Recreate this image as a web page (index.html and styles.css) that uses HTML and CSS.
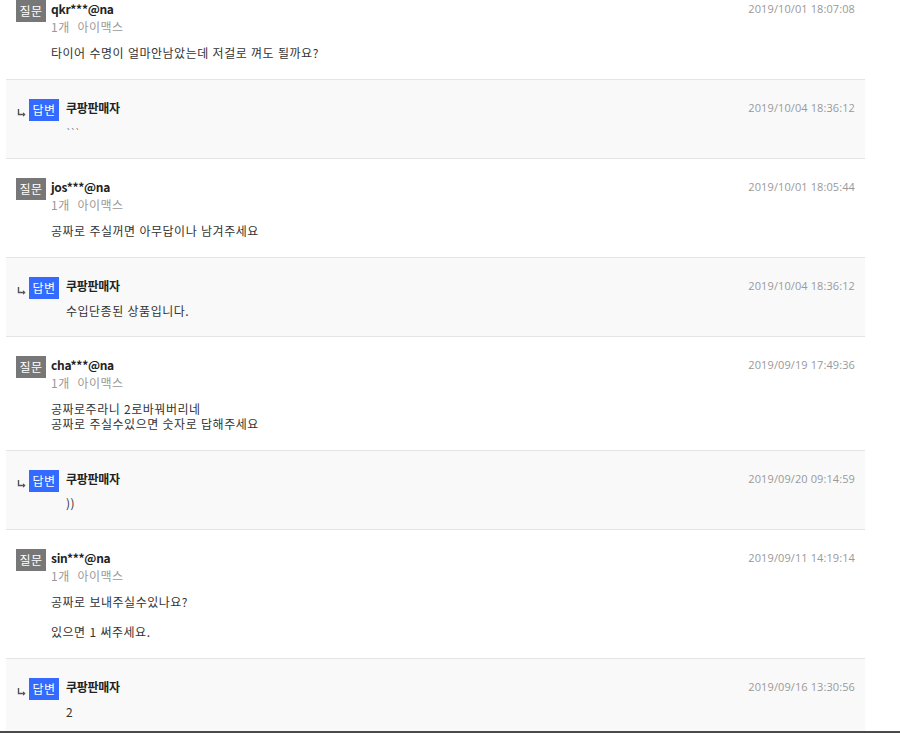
FILE: index.html
```html
<!DOCTYPE html>
<html lang="ko">
<head>
<meta charset="utf-8">
<title>상품문의</title>
<link rel="stylesheet" href="styles.css">
</head>
<body>
<div class="viewport">
  <div class="qna-list">
    <div class="qna-q">
      <span class="badge badge-q">질문</span>
      <div class="qna-body">
        <div class="qna-name">qkr***@na</div>
        <div class="qna-meta">1개&nbsp;&nbsp;아이맥스</div>
        <div class="qna-text"><p>타이어 수명이 얼마안남았는데 저걸로 껴도 될까요?</p></div>
      </div>
      <div class="qna-date">2019/10/01 18:07:08</div>
    </div>
    <div class="qna-a">
      <span class="arrow"><svg width="9" height="8" viewBox="0 0 9 8"><path d="M1.5 0V5.5H7.5" fill="none" stroke="#555" stroke-width="1.4"/><path d="M6 3.2L8.6 5.5L6 7.8Z" fill="#555"/></svg></span>
      <span class="badge badge-a">답변</span>
      <div class="qna-body">
        <div class="qna-name">쿠팡판매자</div>
        <div class="qna-answer"><span class="ticks">```</span></div>
      </div>
      <div class="qna-date">2019/10/04 18:36:12</div>
    </div>

    <div class="qna-q">
      <span class="badge badge-q">질문</span>
      <div class="qna-body">
        <div class="qna-name">jos***@na</div>
        <div class="qna-meta">1개&nbsp;&nbsp;아이맥스</div>
        <div class="qna-text"><p>공짜로 주실꺼면 아무답이나 남겨주세요</p></div>
      </div>
      <div class="qna-date">2019/10/01 18:05:44</div>
    </div>
    <div class="qna-a">
      <span class="arrow"><svg width="9" height="8" viewBox="0 0 9 8"><path d="M1.5 0V5.5H7.5" fill="none" stroke="#555" stroke-width="1.4"/><path d="M6 3.2L8.6 5.5L6 7.8Z" fill="#555"/></svg></span>
      <span class="badge badge-a">답변</span>
      <div class="qna-body">
        <div class="qna-name">쿠팡판매자</div>
        <div class="qna-answer">수입단종된 상품입니다.</div>
      </div>
      <div class="qna-date">2019/10/04 18:36:12</div>
    </div>

    <div class="qna-q">
      <span class="badge badge-q">질문</span>
      <div class="qna-body">
        <div class="qna-name">cha***@na</div>
        <div class="qna-meta">1개&nbsp;&nbsp;아이맥스</div>
        <div class="qna-text"><p>공짜로주라니 2로바꿔버리네<br>공짜로 주실수있으면 숫자로 답해주세요</p></div>
      </div>
      <div class="qna-date">2019/09/19 17:49:36</div>
    </div>
    <div class="qna-a">
      <span class="arrow"><svg width="9" height="8" viewBox="0 0 9 8"><path d="M1.5 0V5.5H7.5" fill="none" stroke="#555" stroke-width="1.4"/><path d="M6 3.2L8.6 5.5L6 7.8Z" fill="#555"/></svg></span>
      <span class="badge badge-a">답변</span>
      <div class="qna-body">
        <div class="qna-name">쿠팡판매자</div>
        <div class="qna-answer">))</div>
      </div>
      <div class="qna-date">2019/09/20 09:14:59</div>
    </div>

    <div class="qna-q">
      <span class="badge badge-q">질문</span>
      <div class="qna-body">
        <div class="qna-name">sin***@na</div>
        <div class="qna-meta">1개&nbsp;&nbsp;아이맥스</div>
        <div class="qna-text"><p>공짜로 보내주실수있나요?</p><p>있으면 1 써주세요.</p></div>
      </div>
      <div class="qna-date">2019/09/11 14:19:14</div>
    </div>
    <div class="qna-a">
      <span class="arrow"><svg width="9" height="8" viewBox="0 0 9 8"><path d="M1.5 0V5.5H7.5" fill="none" stroke="#555" stroke-width="1.4"/><path d="M6 3.2L8.6 5.5L6 7.8Z" fill="#555"/></svg></span>
      <span class="badge badge-a">답변</span>
      <div class="qna-body">
        <div class="qna-name">쿠팡판매자</div>
        <div class="qna-answer">2</div>
      </div>
      <div class="qna-date">2019/09/16 13:30:56</div>
    </div>
  </div>
</div>
</body>
</html>
```

FILE: styles.css
```css
html, body {
  margin: 0;
  padding: 0;
  background: #fff;
}
body {
  font-family: "Noto Sans CJK KR", "Noto Sans", sans-serif;
  font-size: 12px;
  color: #333;
}
.viewport {
  height: 731px;
  overflow: hidden;
  border-bottom: 2px solid #4a4a4a;
}
.qna-list {
  margin: -19px 0 0 6px;
  width: 859px;
}
.qna-q,
.qna-a {
  display: flex;
  align-items: flex-start;
  padding: 19px 10px;
}
.qna-q {
  box-sizing: border-box;
}
.qna-a {
  background: #f9f9f9;
  border-top: 1px solid #e4e4e4;
  border-bottom: 1px solid #e4e4e4;
  padding: 19px 10px 18px;
}
.badge {
  flex: none;
  width: 30px;
  height: 22px;
  line-height: 22px;
  text-align: center;
  color: #fff;
  font-size: 12px;
  letter-spacing: 0.5px;
}
.badge-q {
  background: #777;
  margin-right: 5px;
}
.badge-a {
  background: #346aff;
  margin-right: 7px;
}
.arrow {
  flex: none;
  width: 13px;
  height: 22px;
  display: flex;
  align-items: flex-end;
  padding-bottom: 4px;
  box-sizing: border-box;
}
.arrow svg {
  display: block;
  margin-left: 1px;
}
.qna-body {
  flex: 1;
  min-width: 0;
}
.qna-name {
  font-weight: bold;
  height: 18px;
  line-height: 18px;
  color: #222;
  letter-spacing: -0.3px;
}
.qna-meta {
  height: 18px;
  line-height: 18px;
  color: #999;
  letter-spacing: 0.5px;
}
.qna-text {
  margin-top: 9px;
  line-height: 15px;
  letter-spacing: 0.5px;
}
.qna-text p {
  margin: 0;
}
.qna-text p + p {
  margin-top: 15px;
}
.qna-answer {
  margin-top: 8px;
  height: 15px;
  line-height: 15px;
  letter-spacing: 0.5px;
}
.ticks {
  font-size: 9px;
  letter-spacing: -1px;
  color: #555;
  vertical-align: top;
  line-height: 15px;
}
.qna-date {
  flex: none;
  height: 18px;
  line-height: 18px;
  color: #999;
  font-family: "Open Sans", "Noto Sans", sans-serif;
  font-size: 11px;
  letter-spacing: 0.1px;
}
```
